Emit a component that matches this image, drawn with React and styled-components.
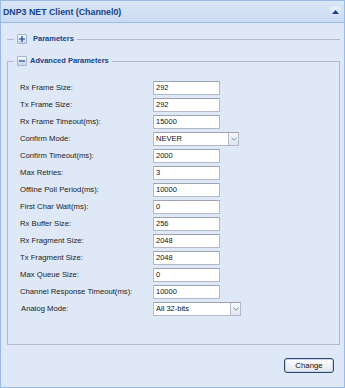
import React from "react";
import styled, { createGlobalStyle } from "styled-components";

const GlobalStyle = createGlobalStyle`
  html, body {
    margin: 0;
    padding: 0;
    background: #ffffff;
  }
  * {
    box-sizing: border-box;
  }
`;

const Panel = styled.div`
  width: 345px;
  height: 388px;
  border: 1px solid #99bbe8;
  display: flex;
  flex-direction: column;
  font-family: "Liberation Sans", Arial, sans-serif;
  background: #dfe8f6;
`;

const Header = styled.div`
  height: 22px;
  flex: none;
  display: flex;
  align-items: center;
  justify-content: space-between;
  padding: 0 3px 0 2px;
  background: linear-gradient(to bottom, #dbe7f7, #c9daf2);
  border-bottom: 1px solid #99bbe8;
`;

const Title = styled.span`
  font-size: 8.8px;
  font-weight: bold;
  color: #15428b;
`;

const ToolButton = styled.div`
  width: 11px;
  height: 10px;
  display: flex;
  align-items: center;
  justify-content: center;
  background: linear-gradient(to bottom, #e9f0fa, #cddcf1);
  border-radius: 1px;
`;

const Body = styled.div`
  flex: 1;
  display: flex;
  flex-direction: column;
  padding-top: 11px;
`;

const FieldSet = styled.fieldset`
  margin: ${(p) => (p.$collapsed ? "0 4px 12px 6px" : "0 4px 0 6px")};
  padding: ${(p) => (p.$collapsed ? "0 12px" : "15px 12px 28px 12px")};
  border: 1px solid #b5b8c8;
  border-width: ${(p) => (p.$collapsed ? "1px 0 0 0" : "1px")};
  min-width: 0;
`;

const Legend = styled.legend`
  margin-left: ${(p) => (p.$collapsed ? -5 : -6)}px;
  padding: 0 3px;
  display: flex;
  align-items: center;
  gap: ${(p) => p.$gap}px;
  height: 10px;
`;

const Toggle = styled.div`
  width: 10px;
  height: 10px;
  border: 1px solid #a3b5cf;
  border-radius: 1px;
  background: linear-gradient(to bottom, #f4f7fb, #c8d5e8);
  display: flex;
  align-items: center;
  justify-content: center;
`;

const LegendText = styled.span`
  font-size: 7.5px;
  font-weight: bold;
  color: #15428b;
  line-height: 10px;
`;

const Form = styled.div`
  display: grid;
  grid-template-columns: 133px auto;
  row-gap: 3px;
  align-items: center;
  justify-items: start;
`;

const Label = styled.span`
  font-size: 7.7px;
  color: #222;
  line-height: 14px;
  padding-left: ${(p) => (p.$indent ? 1 : 0)}px;
`;

const TextBox = styled.div`
  width: 67px;
  height: 14px;
  background: #fff;
  border: 1px solid #b5b8c8;
  border-top-color: #9da3b4;
  font-size: 7.5px;
  line-height: 12px;
  padding-left: 2px;
  color: #111;
`;

const Select = styled.div`
  width: ${(p) => p.$width}px;
  height: 14px;
  display: flex;
  background: #fff;
  border: 1px solid #b5b8c8;
  border-top-color: #9da3b4;
`;

const SelectValue = styled.div`
  flex: 1;
  font-size: 7.5px;
  line-height: 12px;
  padding-left: 2px;
  color: #111;
`;

const SelectArrow = styled.div`
  width: 10px;
  height: 12px;
  border-left: 1px solid #b5b8c8;
  background: linear-gradient(to bottom, #f7f9fc, #dde5f0);
  display: flex;
  align-items: center;
  justify-content: center;
`;

const Footer = styled.div`
  display: flex;
  justify-content: flex-end;
  padding: 13px 10px 0 0;
`;

const Button = styled.button`
  width: 50px;
  height: 15px;
  padding: 0;
  border: 1px solid #2d4a73;
  border-radius: 3px;
  background: linear-gradient(to bottom, #ffffff, #e2e4ea);
  box-shadow: inset 0 0 0 1px #c7d3e6;
  font-family: "Liberation Sans", Arial, sans-serif;
  font-size: 7.8px;
  color: #111;
`;

const Plus = () => (
  <svg width="8" height="8" viewBox="0 0 8 8">
    <path d="M1 4h6M4 1v6" stroke="#15428b" strokeWidth="1.2" />
  </svg>
);

const Minus = () => (
  <svg width="8" height="8" viewBox="0 0 8 8">
    <path d="M1 4h6" stroke="#15428b" strokeWidth="1.2" />
  </svg>
);

const Chevron = () => (
  <svg width="6" height="4" viewBox="0 0 6 4">
    <path d="M0.5 0.8L3 3.2L5.5 0.8" stroke="#6f86a8" strokeWidth="0.9" fill="none" />
  </svg>
);

const fields = [
  { label: "Rx Frame Size:", value: "292" },
  { label: "Tx Frame Size:", value: "292" },
  { label: "Rx Frame Timeout(ms):", value: "15000" },
  { label: "Confirm Mode:", value: "NEVER", select: 86 },
  { label: "Confirm Timeout(ms):", value: "2000" },
  { label: "Max Retries:", value: "3" },
  { label: "Offline Poll Period(ms):", value: "10000" },
  { label: "First Char Wait(ms):", value: "0" },
  { label: "Rx Buffer Size:", value: "256" },
  { label: "Rx Fragment Size:", value: "2048" },
  { label: "Tx Fragment Size:", value: "2048" },
  { label: "Max Queue Size:", value: "0" },
  { label: "Channel Response Timeout(ms):", value: "10000" },
  { label: "Analog Mode:", value: "All 32-bits", select: 88, indent: true },
];

export default function App() {
  return (
    <>
      <GlobalStyle />
      <Panel>
        <Header>
          <Title>DNP3 NET Client (Channel0)</Title>
          <ToolButton>
            <svg width="7" height="4" viewBox="0 0 7 4">
              <path d="M0 4L3.5 0L7 4Z" fill="#15428b" />
            </svg>
          </ToolButton>
        </Header>
        <Body>
          <FieldSet $collapsed>
            <Legend $collapsed $gap={6}>
              <Toggle>
                <Plus />
              </Toggle>
              <LegendText>Parameters</LegendText>
            </Legend>
          </FieldSet>
          <FieldSet>
            <Legend $gap={3}>
              <Toggle>
                <Minus />
              </Toggle>
              <LegendText>Advanced Parameters</LegendText>
            </Legend>
            <Form>
              {fields.map((f) => (
                <React.Fragment key={f.label}>
                  <Label $indent={f.indent}>{f.label}</Label>
                  {f.select ? (
                    <Select $width={f.select}>
                      <SelectValue>{f.value}</SelectValue>
                      <SelectArrow>
                        <Chevron />
                      </SelectArrow>
                    </Select>
                  ) : (
                    <TextBox>{f.value}</TextBox>
                  )}
                </React.Fragment>
              ))}
            </Form>
          </FieldSet>
          <Footer>
            <Button>Change</Button>
          </Footer>
        </Body>
      </Panel>
    </>
  );
}
